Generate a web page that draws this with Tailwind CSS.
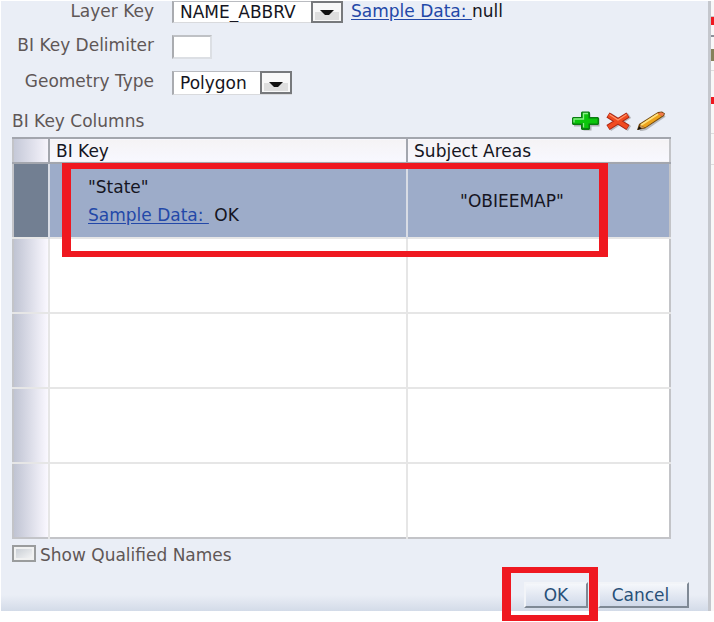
<!DOCTYPE html>
<html lang="en">
<head>
<meta charset="utf-8">
<title>Edit Layer</title>
<script src="https://cdn.jsdelivr.net/npm/@tailwindcss/browser@4"></script>
</head>
<body class="min-h-screen bg-white font-['DejaVu_Sans',Verdana,sans-serif] text-[17px] leading-5 text-[#151522]">
<div class="flex pt-px pl-px">
  <main class="min-w-0 flex-1 bg-[linear-gradient(to_top,#d3dbe8,#eaeef6_16px)] pr-[37px] pb-[3px] pl-[11px]">
    <form>
      <div class="grid grid-cols-[142px_1fr] gap-x-[18px] gap-y-3 text-[#5f5757]">
        <label for="layer" class="-ml-4 text-right">Layer Key</label>
        <div class="flex items-start gap-2">
          <div class="relative flex h-[22px]">
            <select id="layer" class="w-[171px] appearance-none border border-l-2 border-[#d9dadd] border-t-[#b9bbc0] border-l-[#a9abb0] bg-white pl-1.5 leading-5 text-[#151522]"><option>NAME_ABBRV</option></select>
            <svg class="pointer-events-none absolute top-0 right-0 h-[22px] w-8" viewBox="0 0 32 22"><path d="M1 1h30v20H1z" fill="#f8f8f8" stroke="#77797c" stroke-width="2"/><path d="M4 11h24v8H4z" fill="#dedede"/><path d="M9 9h14l-5 5h-4z" fill="#111"/></svg>
          </div>
          <p class="text-[#151522]"><a href="#" class="whitespace-pre text-[#2348a8] underline underline-offset-2">Sample Data: </a>null</p>
        </div>
        <label for="delim" class="-ml-4 text-right">BI Key Delimiter</label>
        <input id="delim" class="h-6 w-10 border-2 border-[#dcdfe4] border-t-[#bfc1c5] border-l-[#aaacb0] bg-white">
        <label for="geom" class="-ml-4 text-right">Geometry Type</label>
        <div class="relative flex h-6 w-[120px]">
          <select id="geom" class="w-full appearance-none border border-l-2 border-[#d9dadd] border-t-[#b9bbc0] border-l-[#a9abb0] bg-white pl-1.5 leading-5 text-[#151522]"><option>Polygon</option></select>
          <svg class="pointer-events-none absolute top-0 right-0 h-6 w-8" viewBox="0 0 32 24"><path d="M1 1h30v21H1z" fill="#f8f8f8" stroke="#77797c" stroke-width="2"/><path d="M4 12h24v8H4z" fill="#dedede"/><path d="M9 11h14l-5 5h-4z" fill="#111"/></svg>
        </div>
      </div>

      <div class="mt-4 flex h-[26px] items-start justify-between">
        <h2 class="text-[#5f5757]">BI Key Columns</h2>
        <div class="flex gap-1 pr-1">
          <button type="button" aria-label="Add" class="h-5 w-[30px]">
            <svg class="h-5 w-[30px]" viewBox="0 0 30 20"><path d="M12.500 2.500h7v5h9v8h-8v4h-8v-4H3v-7h9z" fill="#555" opacity=".4"/><path d="M10 1.500L11 .5h7l1 1V6h8l1 1v6l-1 1h-8v4l-1 1h-7l-1-1v-4H2l-1-1V7l1-1h8z" fill="#0a7d10"/><path d="M11.500 2h6v5.500h9v5h-9V17h-5v-4.500H2.500v-5h9z" fill="#0bc60b"/><path d="M3 11.500V8h9.500V2.500h4.500M12.500 16.500V12" fill="none" stroke="#86f084" stroke-width="1.300"/></svg>
          </button>
          <button type="button" aria-label="Delete" class="h-5 w-[28px]">
            <svg class="h-5 w-[28px]" viewBox="0 0 28 20"><path d="M4.500 4.500l20 13M24.500 4.500l-20 13" stroke="#555" stroke-opacity=".35" stroke-width="6"/><path d="M3 4l20 12.500M23 4L3 16.500" stroke="#a82412" stroke-width="6"/><path d="M3.500 4.300l19 12M22.500 4.300l-19 12" stroke="#f04a20" stroke-width="4"/><path d="M4.500 3.500l8.500 5.500 8.500-5.500" fill="none" stroke="#ff9468" stroke-width="1.200"/></svg>
          </button>
          <button type="button" aria-label="Edit" class="h-5 w-[30px]">
            <svg class="h-5 w-[30px]" viewBox="0 0 30 20"><path d="M3 19.500l6-1.500L28 5" fill="none" stroke="#555" stroke-opacity=".35" stroke-width="2"/><path d="M0 19l2-6L21 1l4-.5 3 2-1 2.500L8 17.500z" fill="#70450c"/><path d="M3 14L20.500 2.500 25 5 8 16.500z" fill="#eda41c"/><path d="M4 14L21 3" stroke="#ffe17c" stroke-width="2"/><path d="M20.500 2.500L24 1.300l3 1.200-.5 1.800L25 5.300z" fill="#f07a4c"/><path d="M3 14l4.500 2.500L3 18z" fill="#c99555"/><path d="M2 15.500l3 2L.5 19z" fill="#111"/></svg>
          </button>
        </div>
      </div>

      <div class="relative">
        <table class="w-full table-fixed border-collapse border-2 border-[#c3c4c8] bg-white text-left">
          <colgroup><col class="w-9"><col class="w-[54.500%]"><col></colgroup>
          <thead>
            <tr class="h-[25px] border-y-2 border-[#a3a6ae] bg-linear-to-b from-[#f5f3f5] to-[#f8f8ff]">
              <th class="border-r-2 border-[#a3a6ae] bg-linear-to-r from-[#c5c9d8] to-[#f6f4fc] p-0"></th>
              <th class="border-r-2 border-[#a3a6ae] p-0 pl-1.5 font-normal">BI Key</th>
              <th class="p-0 pl-1.5 font-normal">Subject Areas</th>
            </tr>
          </thead>
          <tbody>
            <tr class="h-[75px] bg-[#9dacc9]">
              <td class="border-r-2 border-[#d8dce5] bg-[#727f92]"></td>
              <td class="border-r-2 border-[#d8dce5] p-0 pl-[38px]">
                <p>"State"</p>
                <p class="mt-2"><a href="#" class="whitespace-pre text-[#2348a8] underline underline-offset-2">Sample Data: </a> OK</p>
              </td>
              <td class="p-0 pl-[52px]">"OBIEEMAP"</td>
            </tr>
            <tr class="h-[75px] border-t-2 border-[#e6e6e6]"><td class="border-r-2 border-[#e6e6e6] bg-linear-to-r from-[#c0c4d3] to-[#faf8ff]"></td><td class="border-r-2 border-[#e6e6e6]"></td><td></td></tr>
            <tr class="h-[75px] border-t-2 border-[#e6e6e6]"><td class="border-r-2 border-[#e6e6e6] bg-linear-to-r from-[#c0c4d3] to-[#faf8ff]"></td><td class="border-r-2 border-[#e6e6e6]"></td><td></td></tr>
            <tr class="h-[75px] border-t-2 border-[#e6e6e6]"><td class="border-r-2 border-[#e6e6e6] bg-linear-to-r from-[#c0c4d3] to-[#faf8ff]"></td><td class="border-r-2 border-[#e6e6e6]"></td><td></td></tr>
            <tr class="h-[75px] border-t-2 border-[#e6e6e6]"><td class="border-r-2 border-[#e6e6e6] bg-linear-to-r from-[#c0c4d3] to-[#faf8ff]"></td><td class="border-r-2 border-[#e6e6e6]"></td><td></td></tr>
          </tbody>
        </table>
        <div class="pointer-events-none absolute top-[26px] right-[63px] left-[50px] h-[94px] border-x-9 border-y-6 border-[#ef1820]"></div>
      </div>

      <div class="mt-1.5 flex items-start gap-1 text-[#5f5757]">
        <input id="qualified" type="checkbox" class="h-[17px] w-6 appearance-none border-2 border-[#9a9c9d] bg-linear-to-br from-[#c3c9d0] to-[#fafafa] shadow-[inset_0_0_0_2px_#f0f1f1]">
        <label for="qualified">Show Qualified Names</label>
      </div>

      <div class="mt-[17px] -mr-[18px] flex justify-end gap-2.5 text-[#285078]">
        <div class="relative">
          <button type="submit" class="h-[26px] w-16 border-2 border-[#f2f4f8] border-r-[#7f8995] border-b-[#7f8995] bg-linear-to-b from-[#f5f7fb] to-[#d0d9e9] leading-5">OK</button>
          <div class="pointer-events-none absolute -top-[15px] -right-[10px] -left-[22px] h-[54px] border-x-9 border-y-6 border-[#ef1820]"></div>
        </div>
        <button type="button" class="h-[26px] w-[91px] border-2 border-[#f2f4f8] border-r-[#7f8995] border-b-[#7f8995] bg-linear-to-b from-[#f5f7fb] to-[#d0d9e9] pr-1.5 leading-5">Cancel</button>
      </div>
    </form>
  </main>
  <aside class="flex w-1.5 shrink-0 flex-col border-l-3 border-[#c4c7cd] bg-[#f8f8f8]">
    <div class="h-4 border-b border-[#c8c8c8]"></div>
    <div class="h-2 bg-[#ef1820]"></div>
    <div class="h-3 border-b-2 border-[#8d9099]"></div>
    <div class="h-[34px] border-b border-[#dddddd] pt-3"><div class="h-3 bg-[#85815a]"></div></div>
    <div class="h-[26px]"></div>
    <div class="h-[7px] bg-[#ef1820]"></div>
    <div class="h-[30px] border-b border-[#dddddd]"></div>
    <div class="h-[31px] border-b border-[#dddddd]"></div>
  </aside>
</div>
</body>
</html>
